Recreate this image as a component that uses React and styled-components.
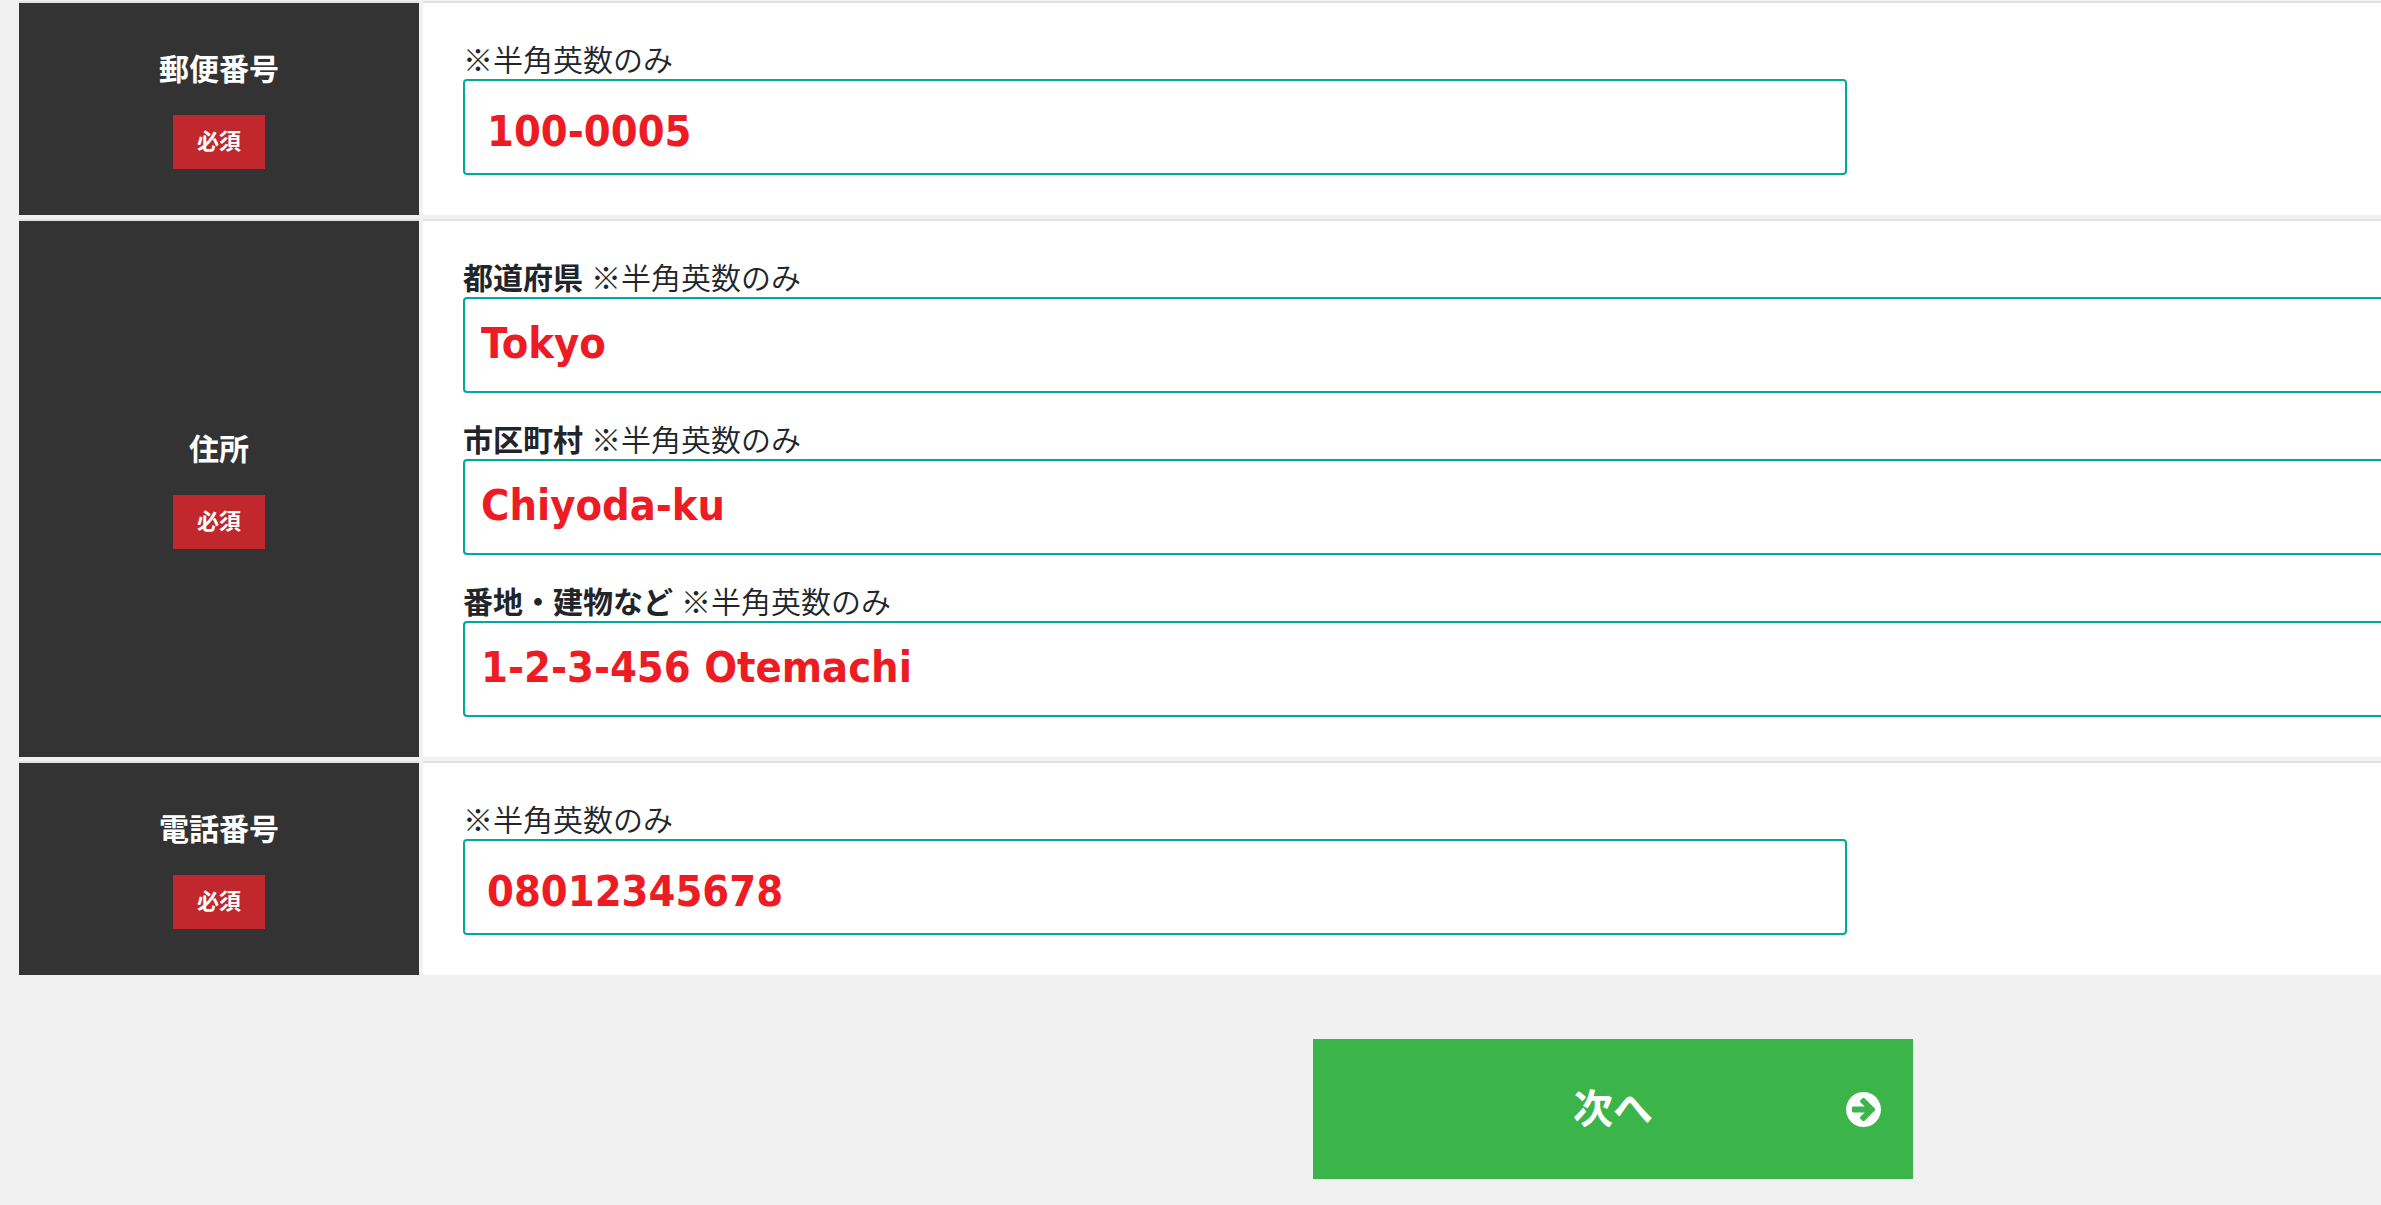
import React, { useId } from "react";
import styled, { createGlobalStyle } from "styled-components";

const GlobalStyle = createGlobalStyle`
  *, *::before, *::after { box-sizing: border-box; }
  body {
    margin: 0;
    background: #f1f1f1;
    color: #212529;
    font-family: "Noto Sans CJK JP", sans-serif;
    font-size: 30px;
    line-height: 36px;
  }
`;

const Form = styled.form`
  padding: 1px 0 26px 19px;
`;

const Rows = styled.div`
  display: grid;
  gap: 4px;
`;

const Row = styled.div`
  display: grid;
  grid-template-columns: 400px 1fr;
  gap: 4px;
`;

const Heading = styled.div`
  display: flex;
  flex-direction: column;
  align-items: center;
  justify-content: center;
  gap: 30px;
  border-top: 2px solid #dee2e6;
  background: #333;
  color: #fff;
  font-weight: 700;
`;

const Required = styled.span`
  padding: 6px 24px 12px;
  background: #c1272d;
  font-size: 22px;
`;

/* Wide fields run to the right side of the window. */
const Fields = styled.div`
  display: grid;
  gap: 30px;
  padding: 40px 0 40px 40px;
  border-top: 2px solid #dee2e6;
  background: #fff;
`;

const Field = styled.div`
  display: flex;
  flex-direction: column;
`;

const Caption = styled.label`
  display: flex;
  gap: 8px;
  padding-bottom: 6px;
  line-height: 30px;
`;

const Note = styled.span`
  font-family: "Noto Sans CJK JP DemiLight", "Noto Sans CJK JP", sans-serif;
  font-weight: 350;
`;

const TextInput = styled.input`
  width: 100%;
  height: 96px;
  padding: 0 16px 4px;
  border: 2px solid #00a99d;
  border-right-width: 0;
  border-radius: 4px 0 0 4px;
  background: #fff;
  color: #ed1c24;
  font-family: "DejaVu Sans Condensed", "DejaVu Sans", sans-serif;
  font-size: 43px;
  font-weight: 700;

  ${(p) =>
    p.$narrow &&
    `
    max-width: 1384px;
    padding: 8px 22px 0;
    border-right-width: 2px;
    border-radius: 4px;
  `}
`;

const Actions = styled.div`
  display: flex;
  justify-content: center;
  padding: 64px 0 0 826px;
`;

const NextButton = styled.button`
  display: grid;
  grid-template-columns: 1fr auto 1fr;
  align-items: center;
  width: 600px;
  height: 140px;
  padding: 0 32px;
  border: 0;
  background: #3bb54a;
  color: #fff;
  font-family: inherit;
  font-size: 40px;
  font-weight: 700;
  line-height: 48px;
  cursor: pointer;
`;

const ButtonText = styled.span`
  grid-column: 2;
  padding-bottom: 6px;
`;

const ArrowIcon = styled.svg`
  justify-self: end;
  width: 35px;
  height: 35px;
  fill: currentColor;
`;

const NOTE = "※半角英数のみ";

const ROWS = [
  { title: "郵便番号", narrow: true, fields: [{ value: "100-0005" }] },
  {
    title: "住所",
    fields: [
      { name: "都道府県", value: "Tokyo" },
      { name: "市区町村", value: "Chiyoda-ku" },
      { name: "番地・建物など", value: "1-2-3-456 Otemachi" },
    ],
  },
  { title: "電話番号", narrow: true, fields: [{ value: "08012345678" }] },
];

function FormField({ name, value, narrow }) {
  const id = useId();
  return (
    <Field>
      <Caption htmlFor={id}>
        {name && <strong>{name}</strong>}
        <Note>{NOTE}</Note>
      </Caption>
      <TextInput id={id} type="text" defaultValue={value} $narrow={narrow} required />
    </Field>
  );
}

export default function App() {
  return (
    <>
      <GlobalStyle />
      <Form onSubmit={(e) => e.preventDefault()}>
        <Rows>
          {ROWS.map((row) => (
            <Row key={row.title} role="group" aria-label={row.title}>
              <Heading>
                <span>{row.title}</span>
                <Required>必須</Required>
              </Heading>
              <Fields>
                {row.fields.map((f) => (
                  <FormField key={f.value} {...f} narrow={row.narrow} />
                ))}
              </Fields>
            </Row>
          ))}
        </Rows>
        <Actions>
          <NextButton type="submit">
            <ButtonText>次へ</ButtonText>
            <ArrowIcon viewBox="128 128 1536 1536" aria-hidden="true">
              <path d="M1413 896q0-27-18-45l-91-91-362-362q-18-18-45-18t-45 18l-91 91q-18 18-18 45t18 45l189 189h-502q-26 0-45 19t-19 45v128q0 26 19 45t45 19h502l-189 189q-19 19-19 45t19 45l91 91q18 18 45 18t45-18l362-362 91-91q18-18 18-45zm251 0q0 209-103 385.5t-279.5 279.5-385.5 103-385.5-103-279.5-279.5-103-385.5 103-385.5 279.5-279.5 385.5-103 385.5 103 279.5 279.5 103 385.5z" />
            </ArrowIcon>
          </NextButton>
        </Actions>
      </Form>
    </>
  );
}
